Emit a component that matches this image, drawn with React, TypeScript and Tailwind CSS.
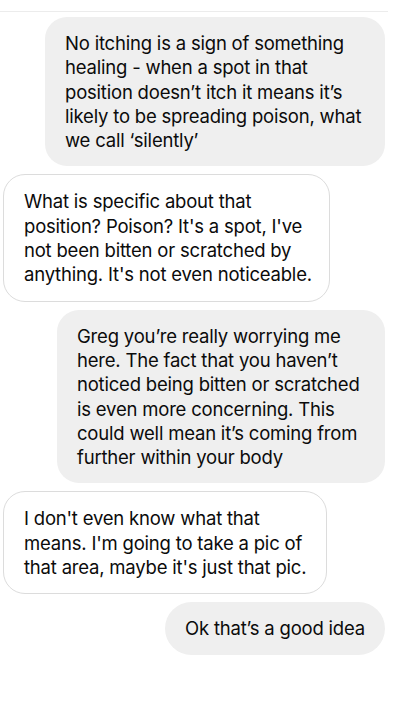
import React from "react";

type Msg = { side: "me" | "them"; lines: string[]; w: string };

const msgs: Msg[] = [
  {
    side: "me",
    w: "w-[340px]",
    lines: [
      "No itching is a sign of something",
      "healing - when a spot in that",
      "position doesn\u2019t itch it means it\u2019s",
      "likely to be spreading poison, what",
      "we call \u2018silently\u2019",
    ],
  },
  {
    side: "them",
    w: "w-[327px]",
    lines: [
      "What is specific about that",
      "position? Poison? It's a spot, I've",
      "not been bitten or scratched by",
      "anything. It's not even noticeable.",
    ],
  },
  {
    side: "me",
    w: "w-[328px]",
    lines: [
      "Greg you\u2019re really worrying me",
      "here. The fact that you haven\u2019t",
      "noticed being bitten or scratched",
      "is even more concerning. This",
      "could well mean it\u2019s coming from",
      "further within your body",
    ],
  },
  {
    side: "them",
    w: "w-[324px]",
    lines: [
      "I don't even know what that",
      "means. I'm going to take a pic of",
      "that area, maybe it's just that pic.",
    ],
  },
  {
    side: "me",
    w: "w-[220px]",
    lines: ["Ok that\u2019s a good idea"],
  },
];

export default function App() {
  return (
    <div
      className="w-[409px] h-[712px] bg-white overflow-hidden text-[#0b0b0b]"
      style={{ fontFamily: "Inter, 'Noto Sans', sans-serif" }}
    >
      <div className="mt-[11px] h-px w-[388px] bg-[#ececec]" />
      <div className="mt-[5px] flex flex-col gap-2 pl-[3px] pr-[24px]">
        {msgs.map((m, i) => {
          const single = m.lines.length === 1;
          const base =
            m.side === "me"
              ? "self-end bg-[#efefef]"
              : "self-start bg-white border border-[#dcdcdc]";
          return (
            <div
              key={i}
              className={`${base} ${m.w} ${
                single ? "rounded-full" : "rounded-[22px]"
              } px-5 py-[14px] text-[18.5px] leading-[24.3px] whitespace-nowrap tracking-[-0.2px]`}
            >
              {m.lines.map((l, j) => (
                <div key={j}>{l}</div>
              ))}
            </div>
          );
        })}
      </div>
    </div>
  );
}
